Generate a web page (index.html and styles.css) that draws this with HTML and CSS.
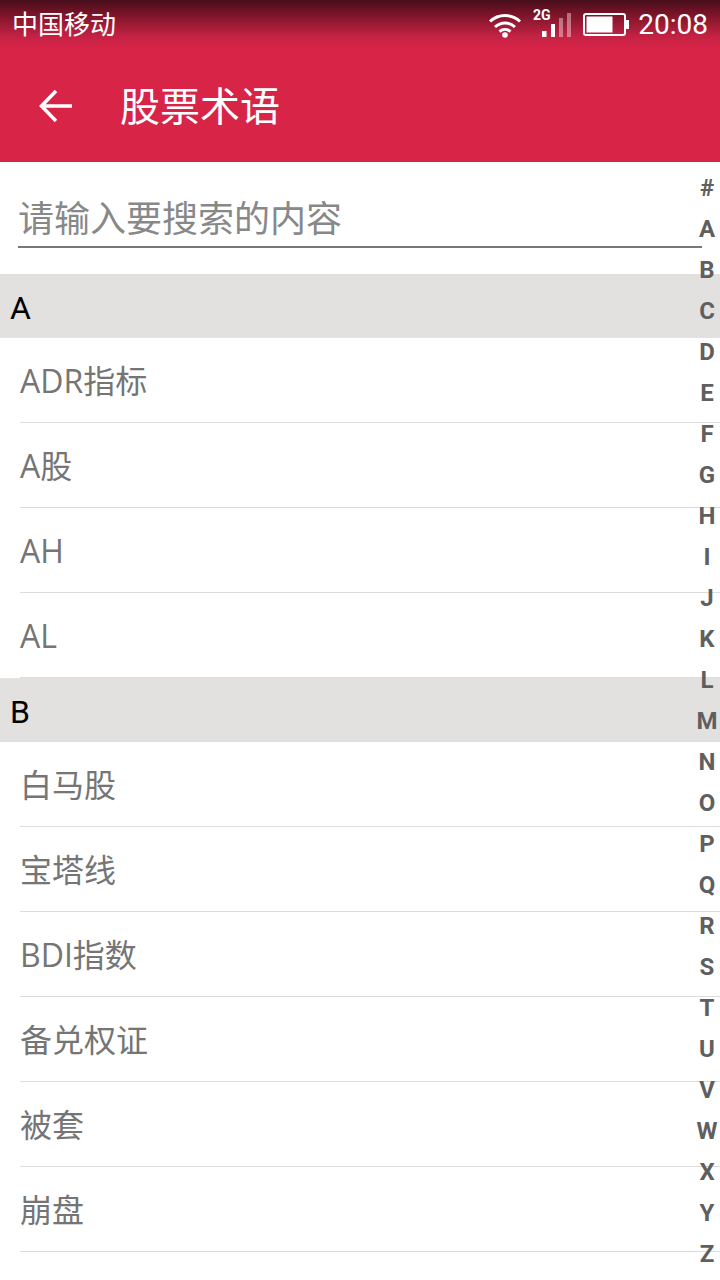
FILE: index.html
```html
<!DOCTYPE html>
<html lang="zh">
<head>
<meta charset="utf-8">
<title>股票术语</title>
<link rel="stylesheet" href="styles.css">
</head>
<body>
<div class="app">
  <header class="bar">
    <div class="status">
      <span class="carrier">中国移动</span>
      <div class="status-right">
        <svg class="wifi" width="34" height="26" viewBox="0 0 34 26"><g fill="none" stroke="#fff" stroke-width="3"><path d="M2 9.500C10.500 1.500 23.500 1.500 32 9.500"/><path d="M7 15C13 9.500 21 9.500 27 15"/><path d="M11.500 19.500C14.800 16.800 19.200 16.800 22.500 19.500"/></g><circle cx="17" cy="23" r="2.800" fill="#fff"/></svg>
        <svg class="signal" width="40" height="40" viewBox="0 -5 40 40"><text x="2" y="9.500" class="gen">2G</text><rect x="11" y="21" width="4.500" height="6" fill="#fff"/><rect x="20" y="14" width="4" height="13" fill="#fff"/><rect x="28" y="8" width="4" height="19" fill="#fff" fill-opacity=".4"/><rect x="36" y="3" width="4" height="24" fill="#fff" fill-opacity=".4"/></svg>
        <svg class="battery" width="46" height="24" viewBox="0 0 46 24"><rect x="1" y="1" width="41" height="21" rx="2" fill="none" stroke="#fff" stroke-width="2"/><rect x="3.500" y="3.500" width="26" height="16" fill="#fff"/><rect x="43" y="7" width="3" height="9" fill="#fff"/></svg>
        <span class="clock">20:08</span>
      </div>
    </div>
    <div class="toolbar">
      <svg class="back" width="36" height="36" viewBox="0 0 36 36"><path d="M34 18H4M18 3L3.500 18L18 33" fill="none" stroke="#fff" stroke-width="3.500"/></svg>
      <h1 class="title">股票术语</h1>
    </div>
  </header>
  <div class="search"><div class="field">请输入要搜索的内容</div></div>
  <section>
    <div class="head">A</div>
    <div class="row">ADR指标</div>
    <div class="row">A股</div>
    <div class="row">AH</div>
    <div class="row">AL</div>
    <div class="head">B</div>
    <div class="row">白马股</div>
    <div class="row">宝塔线</div>
    <div class="row">BDI指数</div>
    <div class="row">备兑权证</div>
    <div class="row">被套</div>
    <div class="row">崩盘</div>
  </section>
  <nav class="index">
    <span>#</span><span>A</span><span>B</span><span>C</span><span>D</span><span>E</span><span>F</span><span>G</span><span>H</span><span>I</span><span>J</span><span>K</span><span>L</span><span>M</span><span>N</span><span>O</span><span>P</span><span>Q</span><span>R</span><span>S</span><span>T</span><span>U</span><span>V</span><span>W</span><span>X</span><span>Y</span><span>Z</span>
  </nav>
</div>
</body>
</html>
```
FILE: styles.css
```css
* { box-sizing: border-box; }
html, body { margin: 0; padding: 0; }
body { background: #fff; font-family: Roboto, "Noto Sans CJK SC", sans-serif; }
.app { position: relative; width: 720px; height: 1280px; overflow: hidden; background: #fff; }
.bar { height: 162px; background: linear-gradient(180deg, #470e1b 0, #7a1428 14px, #c32244 36px, #d72447 48px, #d72447 100%); color: #fff; }
.status { height: 50px; display: flex; align-items: center; justify-content: space-between; padding: 0 12px 0 12px; }
.carrier { font-size: 26px; line-height: 50px; }
.status-right { display: flex; align-items: center; }
.wifi { margin-right: 9px; }
.signal { margin-right: 12px; }
.gen { font: 700 14px Roboto, sans-serif; fill: #fff; }
.battery { margin-right: 9px; }
.clock { font-size: 28px; line-height: 50px; }
.toolbar { height: 112px; display: flex; align-items: center; padding: 0 0 0 38px; }
.back { margin-right: 46px; }
.title { margin: 0; font-size: 40px; font-weight: 400; line-height: 112px; margin-top: 4px; }
.search { height: 112px; padding: 32px 18px 0; }
.field { height: 54px; border-bottom: 2px solid #777; color: #888; font-size: 36px; line-height: 53px; }
.head { height: 64px; background: #e2e1df; color: #000; font-size: 32px; line-height: 68px; padding-left: 10px; }
.row { height: 85px; margin-left: 20px; border-bottom: 1px solid #dcdcdc; color: #757575; font-family: "Open Sans", "Noto Sans CJK SC", sans-serif; font-size: 32px; line-height: 86px; }
.index { position: absolute; right: 0; top: 168px; width: 26px; display: flex; flex-direction: column; align-items: center; }
.index span { height: 41px; line-height: 41px; font-size: 24px; font-weight: 700; color: #5f5f5f; }
```
